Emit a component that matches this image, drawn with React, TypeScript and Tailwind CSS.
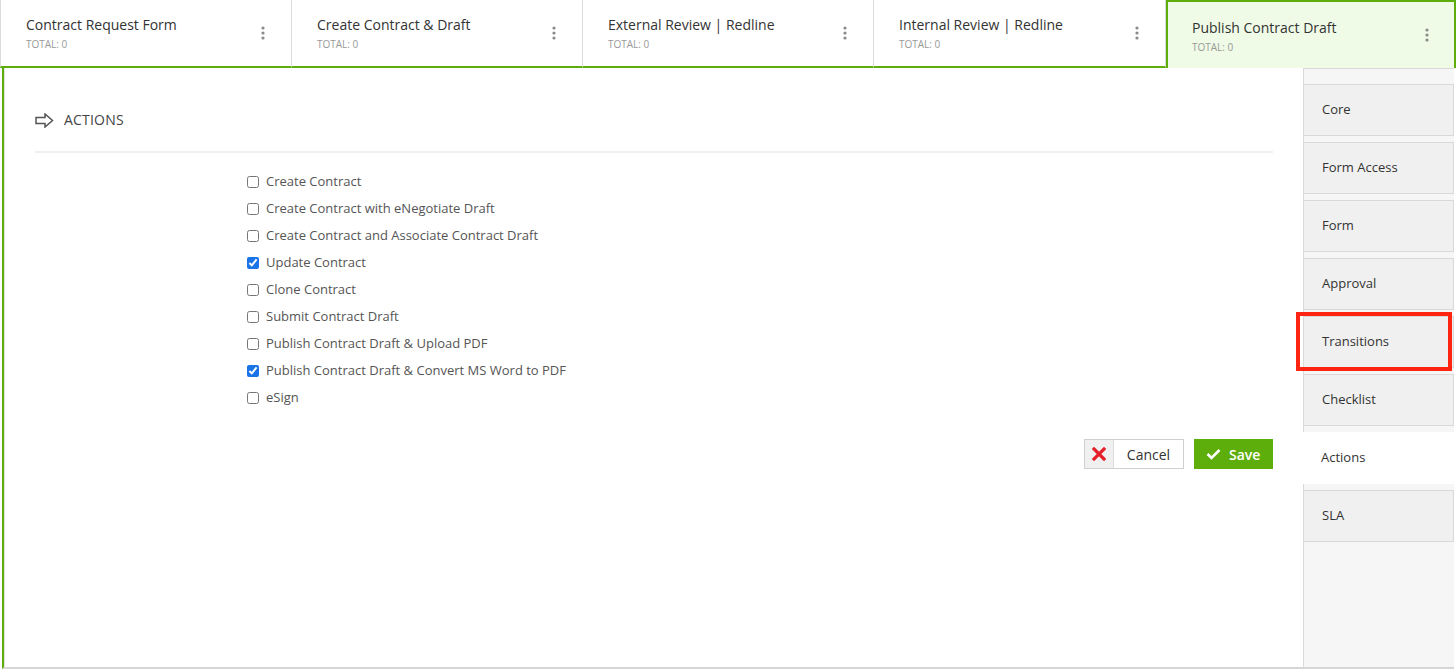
import React from "react";

const stages: [string, number][] = [
  ["Contract Request Form", 292],
  ["Create Contract & Draft", 291],
  ["External Review | Redline", 291],
  ["Internal Review | Redline", 292],
  ["Publish Contract Draft", 290],
];

const actions: [string, boolean][] = [
  ["Create Contract", false],
  ["Create Contract with eNegotiate Draft", false],
  ["Create Contract and Associate Contract Draft", false],
  ["Update Contract", true],
  ["Clone Contract", false],
  ["Submit Contract Draft", false],
  ["Publish Contract Draft & Upload PDF", false],
  ["Publish Contract Draft & Convert MS Word to PDF", true],
  ["eSign", false],
];

const sideTabs = ["Core", "Form Access", "Form", "Approval", "Transitions", "Checklist", "Actions", "SLA"];

function Dots() {
  return (
    <svg width="4" height="14" viewBox="0 0 4 14" className="shrink-0">
      <circle cx="2" cy="2" r="1.6" fill="#8a8a8a" />
      <circle cx="2" cy="7" r="1.6" fill="#8a8a8a" />
      <circle cx="2" cy="12" r="1.6" fill="#8a8a8a" />
    </svg>
  );
}

function StageTab({ title, width, active, first }: { title: string; width: number; active: boolean; first: boolean }) {
  if (active) {
    return (
      <div
        className="flex items-center justify-between pl-[24px] pr-[25px] bg-[#effbe6] border-2 border-b-0 border-[#5eae0b] h-[68px]"
        style={{ width }}
      >
        <div className="pt-[2px]">
          <div className="text-[14px] leading-[18px] text-[#333]">{title}</div>
          <div className="text-[10px] leading-[12px] mt-[4px] text-[#999]">TOTAL: 0</div>
        </div>
        <Dots />
      </div>
    );
  }
  return (
    <div
      className={`flex items-center justify-between pl-[25px] pr-[26px] h-[68px] border-r border-[#dcdcdc] border-b-2 border-b-[#5eae0b] bg-white ${
        first ? "border-l border-l-[#dcdcdc]" : ""
      }`}
      style={{ width }}
    >
      <div>
        <div className="text-[14px] leading-[18px] text-[#333]">{title}</div>
        <div className="text-[10px] leading-[12px] mt-[4px] text-[#999]">TOTAL: 0</div>
      </div>
      <Dots />
    </div>
  );
}

export default function App() {
  return (
    <div
      className="w-[1456px] h-[669px] flex flex-col bg-white overflow-hidden"
      style={{ fontFamily: '"Open Sans", "Liberation Sans", sans-serif' }}
    >
      <div className="flex">
        {stages.map(([s, w], i) => (
          <StageTab key={s} title={s} width={w} active={i === 4} first={i === 0} />
        ))}
      </div>
      <div className="flex flex-1 min-h-0 pl-[2px]">
        <div className="flex-1 border-l-2 border-[#5eae0b] border-b-2 border-b-[#d6d6d6] pr-[30px]">
          <div className="border-l border-[#e2e2e2] pl-[30px] h-full">
            <div className="flex items-center gap-[10px] pt-[43px] pb-[22px] border-b-2 border-[#efefef]">
              <svg width="19" height="15" viewBox="0 0 19 15">
                <path
                  d="M1 4.5 H10 V1 L17.5 7.5 L10 14 V10.5 H1 Z"
                  fill="none"
                  stroke="#555"
                  strokeWidth="1.5"
                  strokeLinejoin="miter"
                />
              </svg>
              <span className="text-[14px] leading-[18px] text-[#444] tracking-[0.2px]">ACTIONS</span>
            </div>
            <div className="pl-[212px] pt-[15px] flex flex-col">
              {actions.map(([label, checked]) => (
                <label key={label} className="flex items-center h-[27px] gap-[7px]">
                  <input
                    type="checkbox"
                    defaultChecked={checked}
                    className="w-[12px] h-[12px] m-0 accent-[#1b73e8]"
                  />
                  <span className="text-[13px] text-[#555]">{label}</span>
                </label>
              ))}
            </div>
            <div className="flex justify-end gap-[10px] mt-[28px]">
              <button className="flex h-[30px] w-[100px] border border-[#cfcfcf] bg-white">
                <span className="w-[29px] h-full bg-[#f0f0f0] border-r border-[#dcdcdc] flex items-center justify-center">
                  <svg width="14" height="14" viewBox="0 0 14 14">
                    <path d="M2 2 L12 12 M12 2 L2 12" stroke="#e5202a" strokeWidth="3.2" strokeLinecap="square" />
                  </svg>
                </span>
                <span className="flex-1 flex items-center justify-center text-[14px] text-[#333]">Cancel</span>
              </button>
              <button className="flex items-center gap-[8px] h-[30px] w-[79px] pl-[12px] bg-[#5eae0b] text-white">
                <svg width="15" height="12" viewBox="0 0 15 12">
                  <path d="M1.5 6 L5.5 10 L13.5 2" fill="none" stroke="#fff" strokeWidth="2.6" />
                </svg>
                <span className="text-[14px] font-semibold">Save</span>
              </button>
            </div>
          </div>
        </div>
        <div className="w-[151px] mr-[2px] bg-[#f6f6f6] border-l border-t border-[#d9d9d9] border-b-2 border-b-[#d6d6d6] flex flex-col pt-[15px] gap-[6px]">
          {sideTabs.map((t) =>
            t === "Actions" ? (
              <div key={t} className="h-[52px] -ml-[1px] mr-[-2px] bg-white flex items-center pl-[18px] text-[13px] text-[#333]">
                {t}
              </div>
            ) : (
              <div
                key={t}
                className="relative h-[52px] bg-[#f0f0f0] border border-[#d9d9d9] border-l-0 flex items-center pl-[18px] text-[13px] text-[#333]"
              >
                {t}
                {t === "Transitions" && (
                  <div className="absolute -left-[8px] -top-[5px] w-[156px] h-[59px] border-[4px] border-[#ff2412]" />
                )}
              </div>
            )
          )}
        </div>
      </div>
    </div>
  );
}
